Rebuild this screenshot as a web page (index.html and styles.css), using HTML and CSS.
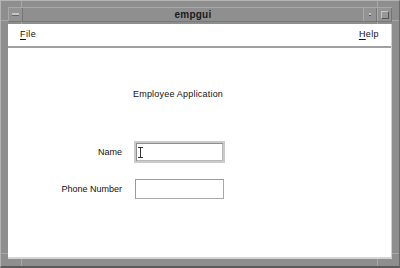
FILE: index.html
```html
<!DOCTYPE html>
<html lang="en">
<head>
    <meta charset="UTF-8">
    <meta name="viewport" content="width=device-width, initial-scale=1.0">
    <title>empgui</title>
    <link rel="stylesheet" href="styles.css">
</head>
<body>
    <div class="window">
        <!-- Window manager title bar -->
        <div class="titlebar">
            <div class="wm-btn wm-menu"><span class="bar"></span></div>
            <div class="wm-title">empgui</div>
            <div class="wm-btn wm-min"><span class="dot"></span></div>
            <div class="wm-btn wm-max"><span class="square"></span></div>
        </div>

        <div class="client">
            <!-- Menu bar -->
            <div class="menubar">
                <span class="menu-item"><u>F</u>ile</span>
                <span class="menu-item"><u>H</u>elp</span>
            </div>

            <!-- Form area -->
            <div class="form-area">
                <p class="heading">Employee Application</p>
                <div class="fields">
                    <label class="field-label">Name</label>
                    <div class="field focused">
                        <svg class="ibeam" width="5" height="11" viewBox="0 0 5 11">
                            <path d="M0 0.5h5M0 10.5h5M2.5 0v11" stroke="#333" stroke-width="1" fill="none"/>
                        </svg>
                    </div>
                    <label class="field-label">Phone Number</label>
                    <div class="field"></div>
                </div>
            </div>
        </div>
    </div>
</body>
</html>
```
FILE: styles.css
```css
/* Global */
body {
    margin: 0;
    padding: 0;
    background: #8c8c8c;
    font-family: 'Liberation Sans', Arial, sans-serif;
}

/* Window frame */
.window {
    position: relative;
    width: 400px;
    height: 268px;
    box-sizing: border-box;
    padding: 7px 7px 7px 7px;
    background: #8e8e8e;
    border-top: 1px solid #b4b4b4;
    border-left: 1px solid #b4b4b4;
    border-bottom: 2px solid #5a5a5a;
    border-right: 1px solid #6a6a6a;
    display: flex;
    flex-direction: column;
}

/* corner resize handle dividers, hidden under the client area */
.window::before,
.window::after {
    content: '';
    position: absolute;
    background: #a8a8a8;
}

.window::before {
    top: 0;
    bottom: 0;
    left: 20px;
    width: 1px;
    box-shadow: 356px 0 0 #a8a8a8;
}

.window::after {
    left: 0;
    right: 0;
    top: 19px;
    height: 1px;
    box-shadow: 0 233px 0 #a8a8a8;
}

/* Title bar */
.titlebar {
    position: relative;
    z-index: 1;
    height: 13px;
    margin-top: -1px;
    display: flex;
    align-items: stretch;
    background: #8f8f8f;
    border-top: 1px solid #a9a9a9;
    border-bottom: 1px solid #777;
}

.wm-btn {
    width: 12px;
    display: flex;
    align-items: center;
    justify-content: center;
    background: #939393;
    border-right: 1px solid #777;
}

.wm-menu {
    width: 13px;
    border-left: 1px solid #a9a9a9;
}

.wm-menu .bar {
    width: 7px;
    height: 2px;
    background: #c6c6c6;
    border-bottom: 1px solid #666;
}

.wm-title {
    flex: 1;
    text-align: center;
    font-size: 10px;
    font-weight: bold;
    line-height: 13px;
    color: #1a1a1a;
    letter-spacing: 0.2px;
}

.wm-min {
    border-left: 1px solid #aaa;
}

.wm-min .dot {
    width: 2px;
    height: 2px;
    background: #c6c6c6;
    border-bottom: 1px solid #555;
}

.wm-max {
    width: 13px;
    border-left: 1px solid #aaa;
}

.wm-max .square {
    width: 6px;
    height: 6px;
    border: 1px solid #c6c6c6;
    border-right-color: #555;
    border-bottom-color: #555;
    background: #979797;
}

/* Client area */
.client {
    position: relative;
    z-index: 1;
    flex: 1;
    margin-top: 2px;
    background: #fff;
    display: flex;
    flex-direction: column;
    border-right: 1px solid #d0d0d0;
    border-bottom: 2px solid #d4d4d4;
}

.menubar {
    height: 24px;
    display: flex;
    justify-content: space-between;
    align-items: center;
    padding: 0 12px 2px 12px;
    box-sizing: border-box;
    border-bottom: 2px solid #a0a0a0;
    font-size: 9px;
    color: #111;
}

.menu-item {
    letter-spacing: 0.4px;
}

.menu-item u {
    text-underline-offset: 2px;
}

/* Form */
.form-area {
    flex: 1;
    padding-top: 41px;
    font-size: 9px;
    color: #111;
}

.heading {
    margin: 0;
    padding-left: 125px;
    line-height: 11px;
    font-size: 9px;
    letter-spacing: 0.2px;
}

.fields {
    margin-top: 41px;
    display: grid;
    grid-template-columns: 110px 91px;
    column-gap: 12px;
    row-gap: 16px;
    align-items: center;
    padding-left: 4px;
}

.field-label {
    text-align: right;
}

.field {
    height: 20px;
    box-sizing: border-box;
    border: 1px solid #a8a8a8;
    border-top-color: #9a9a9a;
    border-left-color: #9a9a9a;
    margin-left: 1px;
    width: 89px;
}

.field.focused {
    height: 22px;
    width: 91px;
    margin-left: 0;
    border: 2px solid #cbcbcb;
    box-shadow: inset 1px 1px 0 #8e8e8e, inset -1px -1px 0 #b8b8b8;
    display: flex;
    align-items: center;
    padding-left: 2px;
}

.ibeam {
    display: block;
}
```
